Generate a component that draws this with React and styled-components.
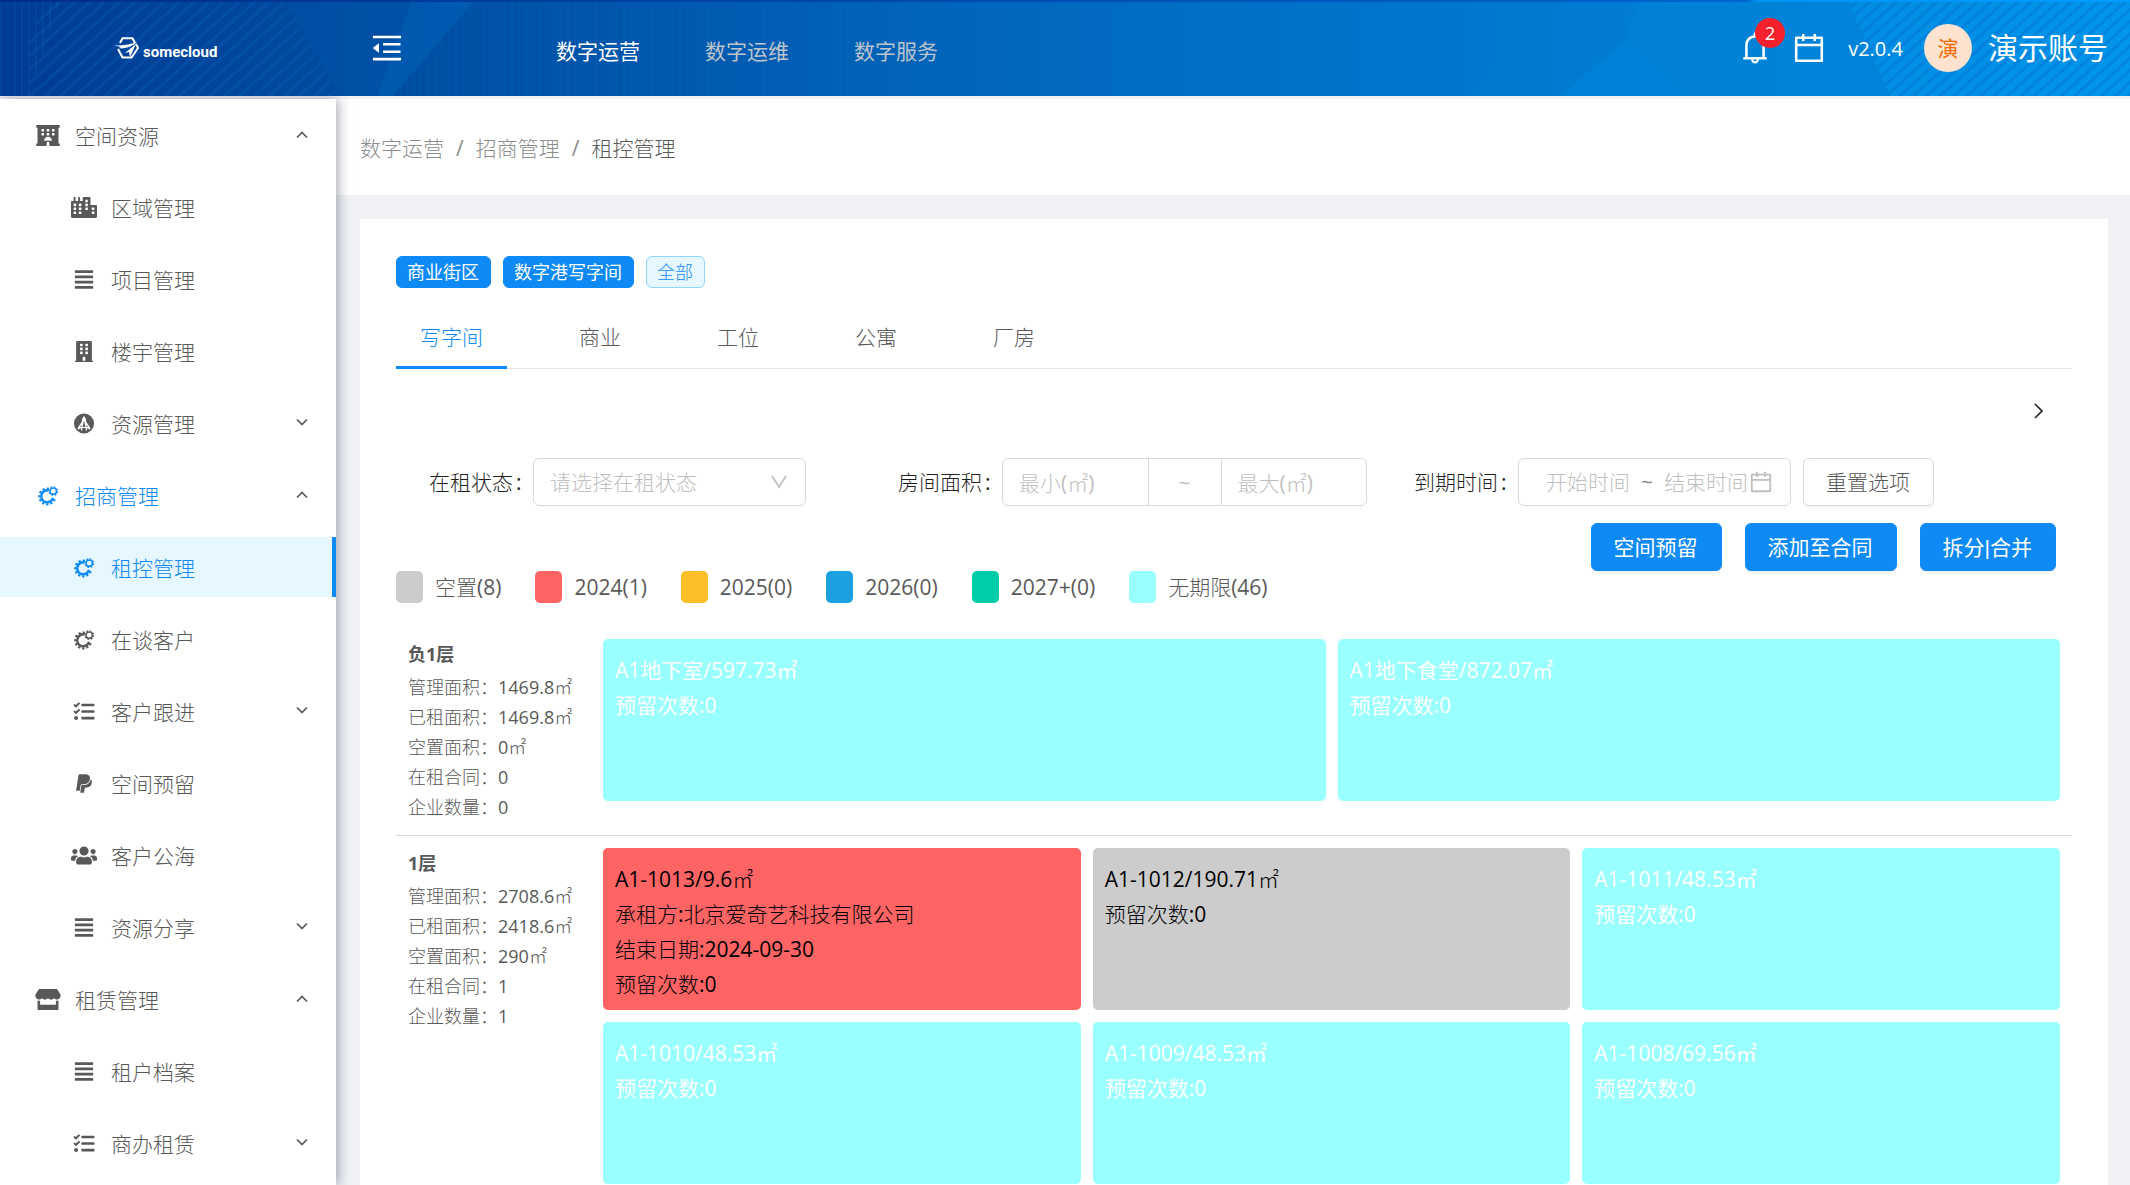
import React, { useState } from "react";
import styled, { createGlobalStyle, css } from "styled-components";
import {
  FaHotel,
  FaCity,
  FaAlignJustify,
  FaBuilding,
  FaTasks,
  FaPaypal,
  FaUsers,
  FaStore,
} from "react-icons/fa";
import { AiOutlineBell, AiOutlineCalendar, AiOutlineMenuFold } from "react-icons/ai";

const primary = "#0d8af5";
const textColor = "#595959";
const lineColor = "#d9d9d9";
const lightStack = '"Open Sans", "Noto Sans CJK SC Light", "Noto Sans CJK SC", sans-serif';
const regularStack = '"Open Sans", "Noto Sans CJK SC", sans-serif';

const GlobalStyle = createGlobalStyle`
  *, *::before, *::after { box-sizing: border-box; }
  body {
    margin: 0;
    font-family: ${lightStack};
    font-size: 21px;
    font-weight: 400;
    line-height: 30px;
    color: ${textColor};
    background: #f0f2f5;
  }
  button, input, select { font: inherit; color: inherit; }
  ul { list-style: none; margin: 0; padding: 0; }
  a { color: inherit; text-decoration: none; }
`;

const Shell = styled.div`
  display: flex;
  flex-direction: column;
  height: 100vh;
  overflow: hidden;
`;

/* ---------- Header ---------- */

const HeaderBar = styled.header`
  position: relative;
  flex: none;
  display: flex;
  align-items: center;
  height: 96px;
  padding-right: 22px;
  color: #fff;
  font-family: ${regularStack};
  background: #0068be;
`;

const Backdrop = styled.svg`
  position: absolute;
  inset: 0;
  width: 100%;
  height: 100%;
`;

const Logo = styled.a`
  position: relative;
  display: flex;
  align-items: flex-end;
  gap: 4px;
  width: 369px;
  padding-left: 114px;
  font-family: Roboto, sans-serif;
  font-size: 15px;
  font-weight: 700;
  line-height: 14px;
`;

const IconButton = styled.button`
  position: relative;
  display: flex;
  padding: 0;
  border: 0;
  background: none;
  font-size: 36px;
  cursor: pointer;
`;

const TopNav = styled.nav`
  position: relative;
  display: flex;
  gap: 65px;
  margin-left: 151px;
  padding-top: 6px;
`;

const TopLink = styled.a`
  color: ${(p) => (p.$active ? "#fff" : "#bfc4cc")};
`;

const HeaderTools = styled.div`
  position: relative;
  display: flex;
  align-items: center;
  gap: 18px;
  margin-left: auto;
`;

const Badge = styled.span`
  position: absolute;
  top: -12px;
  left: 18px;
  width: 30px;
  height: 30px;
  border-radius: 15px;
  background: #f5222d;
  font-size: 18px;
  line-height: 30px;
  text-align: center;
`;

const Version = styled.span`
  margin: 2px 3px 0;
  font-size: 20px;
`;

const Account = styled.button`
  display: flex;
  align-items: center;
  gap: 16px;
  padding: 0;
  border: 0;
  background: none;
  font-size: 30px;
  line-height: 42px;
  cursor: pointer;
`;

const Avatar = styled.span`
  width: 48px;
  height: 48px;
  border-radius: 50%;
  background: #fde3cf;
  color: #f56a00;
  font-size: 21px;
  line-height: 48px;
`;

/* ---------- Sidebar ---------- */

const Body = styled.div`
  flex: 1;
  display: flex;
  min-height: 0;
  margin-top: 3px;
`;

const Sidebar = styled.nav`
  position: relative;
  flex: none;
  width: 336px;
  padding-top: 6px;
  overflow: visible;
  background: #fff;
  box-shadow: 2px 0 12px rgba(29, 35, 60, 0.4);
  clip-path: inset(-3px -20px 0 0);
`;

const MenuItem = styled.a`
  display: flex;
  align-items: center;
  gap: 14px;
  height: 60px;
  margin-bottom: 12px;
  padding: 0 28px 0 ${(p) => (p.$child ? 71 : 35)}px;
  ${(p) => p.$tone && css`color: ${primary};`}
  ${(p) =>
    p.$active &&
    css`
      padding-right: 24px;
      border-right: 4px solid ${primary};
      background: #e6f7ff;
    `}
`;

const MenuIcon = styled.span`
  display: flex;
  svg { width: 26px; height: 21px; }
`;

const MenuLabel = styled.span`
  flex: 1;
  padding-top: 2px;
`;

/* ---------- Main ---------- */

const Main = styled.main`
  flex: 1;
  min-width: 0;
  overflow: auto;
  scrollbar-width: none;
`;

const Crumbs = styled.ol`
  display: flex;
  gap: 12px;
  align-items: center;
  height: 96px;
  margin: 0;
  padding: 2px 24px 0;
  list-style: none;
  background: #fff;
  color: #8c8c8c;
`;

const Crumb = styled.li`
  color: ${(p) => (p.$current ? textColor : "inherit")};
`;

const Card = styled.section`
  margin: 24px 22px 24px 24px;
  padding: 37px 36px 36px;
  background: #fff;
`;

const TagRow = styled.div`
  display: flex;
  gap: 12px;
`;

const Tag = styled.button`
  height: 32px;
  padding: 0 11px 0 10px;
  border: 1px solid ${(p) => (p.$solid ? primary : "#91d5ff")};
  border-radius: 6px;
  background: ${(p) => (p.$solid ? primary : "#e6f7ff")};
  color: ${(p) => (p.$solid ? "#fff" : primary)};
  font-family: ${(p) => (p.$solid ? regularStack : lightStack)};
  font-size: 18px;
  cursor: pointer;
`;

const Tabs = styled.div`
  display: flex;
  gap: 48px;
  margin-top: 17px;
  box-shadow: inset 0 -1px #e8e8e8;
`;

const Tab = styled.button`
  height: 64px;
  padding: 2px 24px 0;
  border: 0;
  border-bottom: 3px solid ${(p) => (p.$active ? primary : "transparent")};
  background: none;
  cursor: pointer;
  ${(p) => p.$active && css`color: ${primary};`}
`;

const ToggleRow = styled.div`
  display: flex;
  align-items: center;
  justify-content: flex-end;
  height: 84px;
  margin-bottom: 5px;
  padding-right: 28px;
  color: #262626;
`;

const PlainButton = styled.button`
  display: flex;
  padding: 0;
  border: 0;
  background: none;
  cursor: pointer;
`;

const Filters = styled.form`
  display: grid;
  grid-template-columns: 469fr 516fr 658fr;
  padding-left: 33px;
`;

const Field = styled.div`
  display: flex;
  align-items: center;
`;

const FieldLabel = styled.label`
  flex: none;
  width: 104px;
  color: #1f1f1f;
  &::after {
    content: ":";
    margin-left: 3px;
  }
`;

const Box = styled.div`
  display: flex;
  align-items: center;
  height: 48px;
  border: 1px solid ${lineColor};
  border-radius: 6px;
  background: #fff;
  color: #bfbfbf;
`;

const SelectBox = styled(Box)`
  position: relative;
  width: 273px;
`;

const Select = styled.select`
  width: 100%;
  height: 46px;
  padding: 0 48px 0 16px;
  border: 0;
  background: none;
  appearance: none;
  outline: none;
`;

const SelectArrow = styled.svg`
  position: absolute;
  right: 18px;
  top: 16px;
  pointer-events: none;
`;

const RangeBox = styled(Box)`
  width: 365px;
`;

const RangeInput = styled.input`
  flex: 1;
  min-width: 0;
  height: 46px;
  padding: 2px 16px 0;
  border: 0;
  background: none;
  outline: none;
  &::placeholder { color: #bfbfbf; opacity: 1; }
`;

const RangeMiddle = styled.span`
  align-self: stretch;
  width: 74px;
  border: solid ${lineColor};
  border-width: 0 1px;
  line-height: 48px;
  text-align: center;
`;

const DateBox = styled(Box)`
  width: 273px;
  margin-right: 12px;
  padding: 0 16px 0 27px;
  svg { flex: none; font-size: 26px; }
`;

const DateInput = styled.input`
  width: 84px;
  padding: 0;
  border: 0;
  background: none;
  outline: none;
  &::placeholder { color: #bfbfbf; opacity: 1; }
`;

const DateTilde = styled.span`
  width: 35px;
  color: #8c8c8c;
  text-align: center;
`;

const Button = styled.button`
  height: 48px;
  padding: 0 23px 0 22px;
  border: 1px solid ${(p) => (p.$primary ? primary : lineColor)};
  border-radius: 6px;
  background: ${(p) => (p.$primary ? primary : "#fff")};
  color: ${(p) => (p.$primary ? "#fff" : textColor)};
  font-family: ${(p) => (p.$primary ? regularStack : lightStack)};
  box-shadow: 0 3px 0 rgba(0, 0, 0, 0.03);
  white-space: nowrap;
  cursor: pointer;
`;

const Bar = styled.span`
  font-family: "Liberation Sans", sans-serif;
`;

const Actions = styled.div`
  display: flex;
  justify-content: flex-end;
  gap: 23px;
  margin-top: 17px;
  padding-right: 16px;
`;

const Legend = styled.ul`
  display: flex;
  gap: 34px;
`;

const LegendItem = styled.li`
  display: flex;
  align-items: center;
  gap: 12px;
  height: 32px;
  &::before {
    content: "";
    width: 27px;
    height: 32px;
    border-radius: 5px;
    background: ${(p) => p.$color};
  }
`;

const Floors = styled.div`
  margin-top: 24px;
`;

const FloorRow = styled.section`
  display: flex;
  align-items: flex-start;
  padding: 12px 12px 13px;
  border-bottom: 1px solid ${lineColor};
`;

const FloorInfo = styled.div`
  flex: none;
  width: 195px;
  font-size: 18px;
`;

const FloorName = styled.h2`
  margin: 0 0 3px;
  font-family: ${regularStack};
  font-size: 18px;
  line-height: 30px;
  font-weight: 700;
`;

const Rooms = styled.div`
  flex: 1;
  display: grid;
  grid-template-columns: repeat(${(p) => p.$columns}, 1fr);
  gap: 12px;
`;

const roomTones = {
  open: { background: "#99ffff", color: "#fff", font: regularStack },
  due: { background: "#ff6464", color: "#000", font: lightStack },
  vacant: { background: "#cccccc", color: "#000", font: lightStack },
};

const Room = styled.article`
  height: 162px;
  padding: 14px 12px 0;
  border-radius: 5px;
  line-height: 35px;
  background: ${(p) => roomTones[p.$tone].background};
  color: ${(p) => roomTones[p.$tone].color};
  font-family: ${(p) => roomTones[p.$tone].font};
`;

/* ---------- Drawings ---------- */

function HeaderBackdrop() {
  return (
    <Backdrop viewBox="0 0 2130 96" preserveAspectRatio="none" aria-hidden="true">
      <defs>
        <linearGradient id="sky">
          <stop offset="0" stopColor="#003c94" />
          <stop offset="0.15" stopColor="#004a9f" />
          <stop offset="0.3" stopColor="#0057ad" />
          <stop offset="0.5" stopColor="#006abf" />
          <stop offset="0.7" stopColor="#0078cf" />
          <stop offset="0.88" stopColor="#0084da" />
          <stop offset="1" stopColor="#0094e8" />
        </linearGradient>
        <linearGradient id="edge">
          <stop offset="0" stopColor="#002c8c" />
          <stop offset="0.82" stopColor="#0064cc" />
          <stop offset="0.825" stopColor="#0092f5" />
          <stop offset="1" stopColor="#009cff" />
        </linearGradient>
        <pattern id="slant" width="10" height="10" patternUnits="userSpaceOnUse" patternTransform="rotate(48)">
          <rect width="3" height="10" fill="#0b6fd0" opacity="0.22" />
        </pattern>
        <pattern id="slantDark" width="9" height="9" patternUnits="userSpaceOnUse" patternTransform="rotate(48)">
          <rect width="3" height="9" fill="#0068c8" opacity="0.35" />
        </pattern>
        <pattern id="upright" width="7" height="10" patternUnits="userSpaceOnUse">
          <rect width="2" height="10" fill="#0b6fd0" opacity="0.16" />
        </pattern>
      </defs>
      <rect width="2130" height="96" fill="url(#sky)" />
      <path d="M0 0H60L30 96H0Z" fill="url(#upright)" />
      <path d="M45 0H285L340 96H30V40Z" fill="url(#slant)" />
      <path d="M285 0H412L377 96H340Z" fill="#0058b4" opacity="0.3" />
      <path d="M412 0H475L393 96H377Z" fill="#0064bc" opacity="0.5" />
      <path d="M475 0H900V96H393Z" fill="url(#upright)" opacity="0.6" />
      <path d="M1330 0H1544L1470 96H1330Z" fill="url(#upright)" opacity="0.6" />
      <path d="M1639 0H1847L1890 96H1691L1625 40Z" fill="#0084d8" opacity="0.5" />
      <path d="M1625 40L1691 96H1561Z" fill="#0086dc" opacity="0.6" />
      <path d="M1847 0H2130V96H1890Z" fill="#0098ec" opacity="0.55" />
      <path d="M1847 0H2130V96H1890Z" fill="url(#slantDark)" />
      <rect width="2130" height="2" fill="url(#edge)" />
    </Backdrop>
  );
}

function LogoMark() {
  return (
    <svg width="25" height="22" viewBox="0 0 25 22" fill="none" stroke="#fff" strokeWidth="2" aria-hidden="true">
      <path d="M6 6L8.500 1.200H18.500L21 6" />
      <path d="M4 12L8.500 20.500H17.500L24 11L22 7" />
      <path d="M0 8.500C8 9 16 7.500 23 5C19 9 14 11 8 11.500L4.500 11L7 10Z" fill="#fff" stroke="none" />
      <path d="M22 7L16 20L15 15L11 16Z" fill="#fff" stroke="none" />
    </svg>
  );
}

function GearIcon() {
  return (
    <svg viewBox="0 0 24 24" fill="none" stroke="currentColor" aria-hidden="true">
      <path d="M13 6.400A6.800 6.800 0 1 0 17.700 14.500" strokeWidth="2.800" />
      <path d="M13 4.300A9 9 0 1 0 20 14.500" strokeWidth="2.600" strokeDasharray="2.600 2.200" />
      <circle cx="18" cy="7" r="3.600" strokeWidth="1.700" />
      <circle cx="18" cy="7" r="5" strokeWidth="1.300" strokeDasharray="2 1.927" />
    </svg>
  );
}

function RocketIcon() {
  return (
    <svg viewBox="0 0 24 24" aria-hidden="true">
      <circle cx="12" cy="12" r="11.500" fill="currentColor" />
      <path
        d="M12 3.500C13.800 5.500 14.500 7.500 14.500 10L19 16.500V19L15.500 17V20H14V17H10V20H8.500V17L5 19V16.500L9.500 10C9.500 7.500 10.200 5.500 12 3.500Z"
        fill="#fff"
      />
      <path d="M12 8.500L13.600 16H10.400Z M8 14.500L9 13V16H8Z M16 14.500L15 13V16H16Z" fill="currentColor" />
    </svg>
  );
}

function Chevron({ up }) {
  return (
    <svg width="12" height="12" viewBox="0 0 12 12" fill="none" stroke={textColor} strokeWidth="1.700" aria-hidden="true">
      <path d={up ? "M1 8.500L6 3.500L11 8.500" : "M1 2.500L6 7.500L11 2.500"} />
    </svg>
  );
}

/* ---------- Data ---------- */

const menu = [
  { label: "空间资源", icon: FaHotel, arrow: "up" },
  { label: "区域管理", icon: FaCity, child: true },
  { label: "项目管理", icon: FaAlignJustify, child: true },
  { label: "楼宇管理", icon: FaBuilding, child: true },
  { label: "资源管理", icon: RocketIcon, child: true, arrow: "down" },
  { label: "招商管理", icon: GearIcon, arrow: "up", tone: true },
  { label: "租控管理", icon: GearIcon, child: true, tone: true, active: true },
  { label: "在谈客户", icon: GearIcon, child: true },
  { label: "客户跟进", icon: FaTasks, child: true, arrow: "down" },
  { label: "空间预留", icon: FaPaypal, child: true },
  { label: "客户公海", icon: FaUsers, child: true },
  { label: "资源分享", icon: FaAlignJustify, child: true, arrow: "down" },
  { label: "租赁管理", icon: FaStore, arrow: "up" },
  { label: "租户档案", icon: FaAlignJustify, child: true },
  { label: "商办租赁", icon: FaTasks, child: true, arrow: "down" },
];

const legend = [
  ["空置(8)", "#cccccc"],
  ["2024(1)", "#ff6464"],
  ["2025(0)", "#fdbf28"],
  ["2026(0)", "#1ba1e2"],
  ["2027+(0)", "#00cca8"],
  ["无期限(46)", "#99ffff"],
];

const floors = [
  {
    name: "负1层",
    columns: 2,
    stats: [["管理面积", "1469.8㎡"], ["已租面积", "1469.8㎡"], ["空置面积", "0㎡"], ["在租合同", "0"], ["企业数量", "0"]],
    rooms: [
      { tone: "open", lines: ["A1地下室/597.73㎡", "预留次数:0"] },
      { tone: "open", lines: ["A1地下食堂/872.07㎡", "预留次数:0"] },
    ],
  },
  {
    name: "1层",
    columns: 3,
    stats: [["管理面积", "2708.6㎡"], ["已租面积", "2418.6㎡"], ["空置面积", "290㎡"], ["在租合同", "1"], ["企业数量", "1"]],
    rooms: [
      { tone: "due", lines: ["A1-1013/9.6㎡", "承租方:北京爱奇艺科技有限公司", "结束日期:2024-09-30", "预留次数:0"] },
      { tone: "vacant", lines: ["A1-1012/190.71㎡", "预留次数:0"] },
      { tone: "open", lines: ["A1-1011/48.53㎡", "预留次数:0"] },
      { tone: "open", lines: ["A1-1010/48.53㎡", "预留次数:0"] },
      { tone: "open", lines: ["A1-1009/48.53㎡", "预留次数:0"] },
      { tone: "open", lines: ["A1-1008/69.56㎡", "预留次数:0"] },
    ],
  },
];

const tabs = ["写字间", "商业", "工位", "公寓", "厂房"];

/* ---------- Page ---------- */

function Header() {
  return (
    <HeaderBar>
      <HeaderBackdrop />
      <Logo href="#">
        <LogoMark />
        somecloud
      </Logo>
      <IconButton type="button" aria-label="收起菜单">
        <AiOutlineMenuFold />
      </IconButton>
      <TopNav>
        <TopLink href="#" $active>数字运营</TopLink>
        <TopLink href="#">数字运维</TopLink>
        <TopLink href="#">数字服务</TopLink>
      </TopNav>
      <HeaderTools>
        <IconButton type="button" aria-label="消息">
          <AiOutlineBell />
          <Badge>2</Badge>
        </IconButton>
        <IconButton type="button" aria-label="日历">
          <AiOutlineCalendar />
        </IconButton>
        <Version>v2.0.4</Version>
        <Account type="button">
          <Avatar>演</Avatar>
          演示账号
        </Account>
      </HeaderTools>
    </HeaderBar>
  );
}

function SideMenu() {
  return (
    <Sidebar>
      {menu.map(({ label, icon: Icon, child, arrow, tone, active }) => (
        <MenuItem key={label} href="#" $child={child} $tone={tone} $active={active}>
          <MenuIcon><Icon /></MenuIcon>
          <MenuLabel>{label}</MenuLabel>
          {arrow && <Chevron up={arrow === "up"} />}
        </MenuItem>
      ))}
    </Sidebar>
  );
}

function FilterBar() {
  return (
    <Filters onSubmit={(e) => e.preventDefault()}>
      <Field>
        <FieldLabel htmlFor="status">在租状态</FieldLabel>
        <SelectBox>
          <Select id="status" defaultValue="">
            <option value="">请选择在租状态</option>
          </Select>
          <SelectArrow width="16" height="14" viewBox="0 0 16 14" fill="none" stroke="#bfbfbf" strokeWidth="1.700" aria-hidden="true">
            <path d="M1 1L8 12L15 1" />
          </SelectArrow>
        </SelectBox>
      </Field>
      <Field>
        <FieldLabel htmlFor="areaMin">房间面积</FieldLabel>
        <RangeBox>
          <RangeInput id="areaMin" placeholder="最小(㎡)" />
          <RangeMiddle>~</RangeMiddle>
          <RangeInput aria-label="最大面积" placeholder="最大(㎡)" />
        </RangeBox>
      </Field>
      <Field>
        <FieldLabel htmlFor="dateFrom">到期时间</FieldLabel>
        <DateBox>
          <DateInput id="dateFrom" placeholder="开始时间" />
          <DateTilde>~</DateTilde>
          <DateInput aria-label="结束时间" placeholder="结束时间" />
          <AiOutlineCalendar />
        </DateBox>
        <Button type="reset">重置选项</Button>
      </Field>
    </Filters>
  );
}

function Floor({ name, columns, stats, rooms }) {
  return (
    <FloorRow>
      <FloorInfo>
        <FloorName>{name}</FloorName>
        {stats.map(([label, value]) => (
          <div key={label}>{label}：{value}</div>
        ))}
      </FloorInfo>
      <Rooms $columns={columns}>
        {rooms.map((room) => (
          <Room key={room.lines[0]} $tone={room.tone}>
            {room.lines.map((line) => <div key={line}>{line}</div>)}
          </Room>
        ))}
      </Rooms>
    </FloorRow>
  );
}

export default function App() {
  const [tab, setTab] = useState(tabs[0]);
  return (
    <Shell>
      <GlobalStyle />
      <Header />
      <Body>
        <SideMenu />
        <Main>
          <Crumbs>
            <Crumb><a href="#">数字运营</a></Crumb>
            <li aria-hidden="true">/</li>
            <Crumb><a href="#">招商管理</a></Crumb>
            <li aria-hidden="true">/</li>
            <Crumb $current>租控管理</Crumb>
          </Crumbs>
          <Card>
            <TagRow>
              <Tag type="button" $solid>商业街区</Tag>
              <Tag type="button" $solid>数字港写字间</Tag>
              <Tag type="button">全部</Tag>
            </TagRow>
            <Tabs role="tablist">
              {tabs.map((name) => (
                <Tab key={name} type="button" role="tab" aria-selected={tab === name} $active={tab === name} onClick={() => setTab(name)}>
                  {name}
                </Tab>
              ))}
            </Tabs>
            <ToggleRow>
              <PlainButton type="button" aria-label="展开">
                <svg width="10" height="16" viewBox="0 0 10 16" fill="none" stroke="currentColor" strokeWidth="1.700">
                  <path d="M1 1L8 8L1 15" />
                </svg>
              </PlainButton>
            </ToggleRow>
            <FilterBar />
            <Actions>
              <Button type="button" $primary>空间预留</Button>
              <Button type="button" $primary>添加至合同</Button>
              <Button type="button" $primary>拆分<Bar>|</Bar>合并</Button>
            </Actions>
            <Legend>
              {legend.map(([label, color]) => (
                <LegendItem key={label} $color={color}>{label}</LegendItem>
              ))}
            </Legend>
            <Floors>
              {floors.map((floor) => <Floor key={floor.name} {...floor} />)}
            </Floors>
          </Card>
        </Main>
      </Body>
    </Shell>
  );
}
